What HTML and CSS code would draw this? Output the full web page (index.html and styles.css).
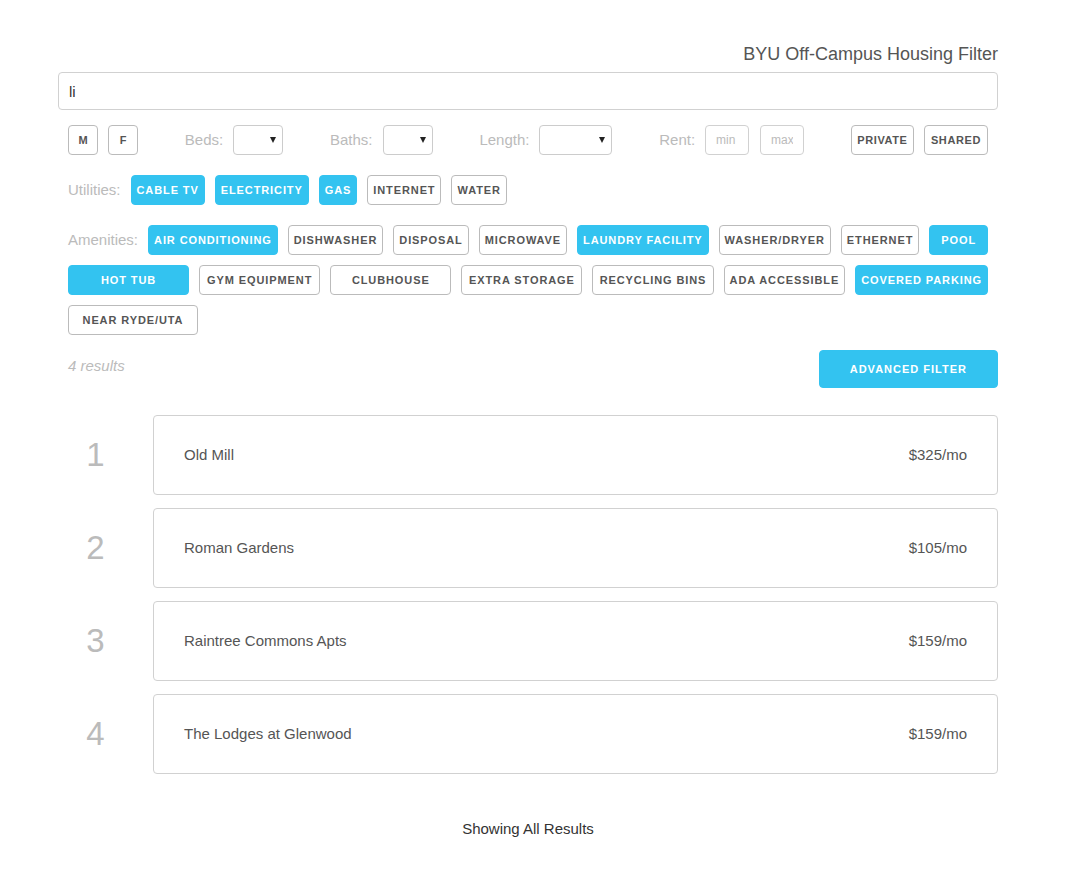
FILE: index.html
```html
<!DOCTYPE html>
<html lang="en">
<head>
<meta charset="utf-8">
<title>BYU Off-Campus Housing Filter</title>
<link rel="stylesheet" href="styles.css">
</head>
<body>
<div class="page">
  <div class="container">
    <h1 class="title">BYU Off-Campus Housing Filter</h1>
    <input class="search" type="text" value="li">

    <div class="filters">
      <div class="group">
        <button class="btn sq">M</button>
        <button class="btn sq">F</button>
      </div>
      <div class="group">
        <span class="lbl">Beds:</span>
        <div class="select w-50"><span class="caret"></span></div>
      </div>
      <div class="group">
        <span class="lbl">Baths:</span>
        <div class="select w-50"><span class="caret"></span></div>
      </div>
      <div class="group">
        <span class="lbl">Length:</span>
        <div class="select w-73"><span class="caret"></span></div>
      </div>
      <div class="group">
        <span class="lbl">Rent:</span>
        <input class="num" type="text" placeholder="min">
        <input class="num" type="text" placeholder="max">
      </div>
      <div class="group">
        <button class="btn tight w-62">Private</button>
        <button class="btn tight w-63">Shared</button>
      </div>
    </div>

    <div class="tag-row utilities">
      <span class="lbl">Utilities:</span>
      <button class="btn on">Cable TV</button>
      <button class="btn on">Electricity</button>
      <button class="btn on">Gas</button>
      <button class="btn">Internet</button>
      <button class="btn">Water</button>
    </div>

    <div class="amenities">
      <div class="tag-row">
        <span class="lbl">Amenities:</span>
        <button class="btn on">Air Conditioning</button>
        <button class="btn">Dishwasher</button>
        <button class="btn">Disposal</button>
        <button class="btn">Microwave</button>
        <button class="btn on">Laundry Facility</button>
        <button class="btn">Washer/Dryer</button>
        <button class="btn">Ethernet</button>
        <button class="btn on grow">Pool</button>
      </div>
      <div class="tag-row even">
        <button class="btn on">Hot Tub</button>
        <button class="btn">Gym Equipment</button>
        <button class="btn">Clubhouse</button>
        <button class="btn">Extra Storage</button>
        <button class="btn">Recycling Bins</button>
        <button class="btn">ADA Accessible</button>
        <button class="btn on">Covered Parking</button>
      </div>
      <div class="tag-row">
        <button class="btn w-130">Near Ryde/UTA</button>
      </div>
    </div>

    <div class="results-bar">
      <span class="count">4 results</span>
      <button class="btn primary adv">Advanced Filter</button>
    </div>

    <ol class="results">
      <li class="result">
        <span class="rank">1</span>
        <div class="card"><span class="name">Old Mill</span><span class="price">$325/mo</span></div>
      </li>
      <li class="result">
        <span class="rank">2</span>
        <div class="card"><span class="name">Roman Gardens</span><span class="price">$105/mo</span></div>
      </li>
      <li class="result">
        <span class="rank">3</span>
        <div class="card"><span class="name">Raintree Commons Apts</span><span class="price">$159/mo</span></div>
      </li>
      <li class="result">
        <span class="rank">4</span>
        <div class="card"><span class="name">The Lodges at Glenwood</span><span class="price">$159/mo</span></div>
      </li>
    </ol>
  </div>
  <p class="footer">Showing All Results</p>
</div>
</body>
</html>
```
FILE: styles.css
```css
html, body {
  margin: 0;
  padding: 0;
  background: #fff;
}

body {
  font-family: "Liberation Sans", Arial, Helvetica, sans-serif;
  font-size: 15px;
  line-height: 20px;
  color: #333;
}

.page {
  width: 1056px;
  padding-top: 43px;
}

.container {
  margin: 0 58px;
  width: 940px;
}

.title {
  margin: 0;
  font-size: 18px;
  line-height: 22px;
  font-weight: normal;
  color: #555;
  text-align: right;
}

.search {
  display: block;
  box-sizing: border-box;
  width: 100%;
  height: 38px;
  margin: 7px 0 0;
  padding: 0 10px;
  border: 1px solid #d1d1d1;
  border-radius: 4px;
  font-family: inherit;
  font-size: 15px;
  color: #333;
  background: #fff;
  outline: none;
}

/* ---------- buttons ---------- */
.btn {
  box-sizing: border-box;
  height: 30px;
  margin: 0;
  padding: 0 5px;
  border: 1px solid #bbb;
  border-radius: 4px;
  background: transparent;
  font-family: "Liberation Sans", Arial, Helvetica, sans-serif;
  font-size: 11px;
  font-weight: bold;
  letter-spacing: 0.9px;
  text-transform: uppercase;
  line-height: 28px;
  color: #555;
  white-space: nowrap;
  text-align: center;
  cursor: pointer;
}

.btn.on,
.btn.primary {
  background: #33c3f0;
  border-color: #33c3f0;
  color: #fff;
}

.btn.sq {
  width: 30px;
  padding: 0;
  letter-spacing: 0;
}

.btn.tight { letter-spacing: 0.6px; }
.w-62 { width: 63px; }
.w-63 { width: 64px; }
.w-130 { width: 130px; }

/* ---------- first filter row ---------- */
.filters {
  display: flex;
  justify-content: space-between;
  align-items: center;
  margin-top: 15px;
  padding: 0 10px;
  height: 30px;
}

.group {
  display: flex;
  align-items: center;
  gap: 10px;
}

.lbl {
  color: #bbb;
  font-size: 15px;
  white-space: nowrap;
}

.select {
  box-sizing: border-box;
  height: 30px;
  border: 1px solid #ccc;
  border-radius: 4px;
  display: flex;
  align-items: center;
  justify-content: flex-end;
  padding-right: 6px;
  background: #fff;
}

.w-50 { width: 50px; }
.w-73 { width: 73px; }

.caret {
  width: 0;
  height: 0;
  border-left: 3px solid transparent;
  border-right: 3px solid transparent;
  border-top: 6px solid #222;
}

.num {
  box-sizing: border-box;
  width: 44px;
  height: 30px;
  margin: 0;
  padding: 0 10px;
  border: 1px solid #d1d1d1;
  border-radius: 4px;
  font-family: inherit;
  font-size: 12px;
  color: #333;
  outline: none;
}

.num::placeholder { color: #bbb; }

.group .num + .num { margin-left: 1px; }

/* ---------- tag rows ---------- */
.tag-row {
  display: flex;
  align-items: center;
  gap: 10px;
  padding: 0 10px;
}

.utilities { margin-top: 20px; }

.amenities {
  margin-top: 20px;
  display: flex;
  flex-direction: column;
  gap: 10px;
}

.btn.grow { flex: 1 1 auto; }

.tag-row.even .btn { flex: 1 1 0; }

/* ---------- results ---------- */
.results-bar {
  display: flex;
  justify-content: space-between;
  align-items: flex-start;
  margin-top: 15px;
  padding-left: 10px;
}

.count {
  padding-top: 6px;
  font-style: italic;
  color: #bbb;
}

.btn.adv {
  height: 38px;
  line-height: 36px;
  padding: 0 30px;
  letter-spacing: 1px;
}

.results {
  list-style: none;
  margin: 27px 0 0;
  padding: 0;
}

.result {
  display: flex;
  align-items: center;
  gap: 20px;
  margin-bottom: 13px;
}

.result:last-child { margin-bottom: 0; }

.rank {
  width: 75px;
  text-align: center;
  font-size: 33px;
  line-height: 40px;
  color: #bbb;
}

.card {
  flex: 1;
  box-sizing: border-box;
  height: 80px;
  display: flex;
  justify-content: space-between;
  align-items: center;
  padding: 0 30px;
  border: 1px solid #d1d1d1;
  border-radius: 4px;
  color: #555;
}

.footer {
  margin: 45px 0 0;
  text-align: center;
  color: #333;
}
```
